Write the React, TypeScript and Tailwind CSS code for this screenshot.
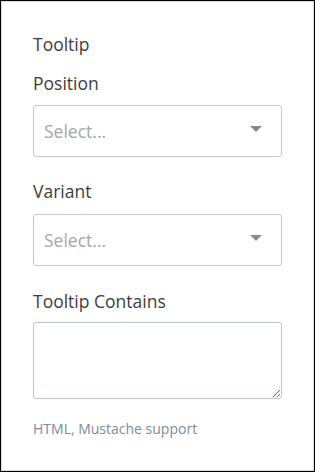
import React from "react";

function SelectBox({ className }: { className?: string }) {
  return (
    <div
      className={
        "flex h-[52px] items-center justify-between rounded-[3px] border border-[#c3c7cb] bg-white pl-[10px] pr-[19px] " +
        (className ?? "")
      }
    >
      <span className="text-[17.5px] leading-[24px] text-[#a6a6a6]">Select...</span>
      <svg width="12" height="6" viewBox="0 0 12 6" className="mb-[4px]">
        <path d="M0 0 L12 0 L6 6 Z" fill="#8a8a8a" />
      </svg>
    </div>
  );
}

export default function App() {
  return (
    <div
      className="h-[472px] w-[315px] border border-black bg-white"
      style={{ fontFamily: '"Open Sans", "Noto Sans", sans-serif' }}
    >
      <div className="flex h-full flex-col border border-[#dadde0] px-[31px] pt-[30px]">
        <div className="text-[17.5px] leading-[24px] text-[#3d3d3d]">Tooltip</div>
        <div className="mt-[15px] text-[17.5px] leading-[24px] text-[#3d3d3d]">Position</div>
        <SelectBox className="mt-[10px]" />
        <div className="mt-[22px] text-[17.5px] leading-[24px] text-[#3d3d3d]">Variant</div>
        <SelectBox className="mt-[11px]" />
        <div className="mt-[23px] text-[17.5px] leading-[24px] text-[#3d3d3d]">Tooltip Contains</div>
        <textarea className="mt-[9px] h-[77px] w-full rounded-[3px] border border-[#bcc3ca] bg-white outline-none" />
        <div className="mt-[20px] text-[14px] leading-[20px] text-[#7d8c9a]">HTML, Mustache support</div>
      </div>
    </div>
  );
}
